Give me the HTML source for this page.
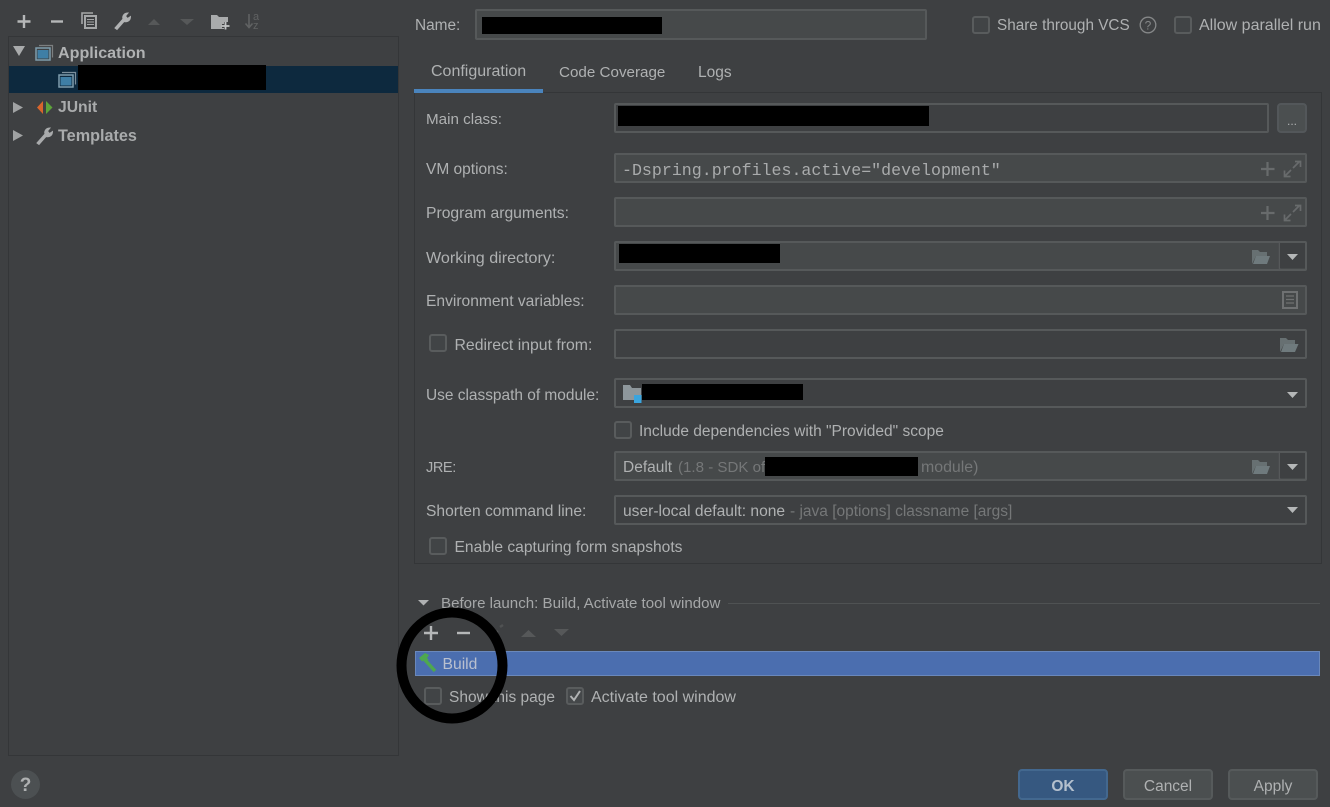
<!DOCTYPE html>
<html><head><meta charset="utf-8"><style>
html,body{margin:0;padding:0;width:1330px;height:807px;overflow:hidden;background:#3e4042}
body{position:relative;font-family:"Liberation Sans",sans-serif;font-size:15.5px;color:#afb1b2}
.a{position:absolute;box-sizing:border-box}
.t{position:absolute;white-space:nowrap;line-height:20px;height:20px}
.f{position:absolute;box-sizing:border-box;left:614px;width:693px;height:30px;border:2px solid #56595a;border-radius:2px;background:#46494a}
.e{background:#3e4042}
.k{position:absolute;background:#000}
.c{position:absolute;box-sizing:border-box;width:18px;height:18px;border:2px solid #595c5d;border-radius:3px;background:#414446}
.b{position:absolute;box-sizing:border-box;top:769px;width:90px;height:31px;border:2px solid #565a5b;border-radius:4px;background:#4b4f50;text-align:center;line-height:32px;font-size:15.5px;color:#afb1b2}
svg{position:absolute;overflow:visible}
</style></head><body>

<!-- left toolbar -->
<svg style="left:0;top:0" width="270" height="36" fill="none">
<path d="M24 15v13M17.5 21.5h13" stroke="#b5b7b8" stroke-width="2.400"/>
<path d="M51 21.5h12" stroke="#b5b7b8" stroke-width="2.400"/>
<path d="M82 24V13h11" stroke="#a5a7a8" stroke-width="1.600"/>
<rect x="85" y="16" width="11" height="12" stroke="#a5a7a8" stroke-width="2"/><path d="M87 19.500h7M87 22h7M87 24.500h7" stroke="#a5a7a8"/>
<path d="M115 28l8-9c-1-3 1-6 5-6l-2.500 3 2 2.500 3-2c0 4-3 6-6.500 5l-7 8z" fill="#b0b2b3" stroke="#b0b2b3"/>
<path d="M148 25l6-6 6 6z" fill="#565859"/><path d="M180 19h14l-7 6z" fill="#565859"/>
<path d="M211 15h6l2 2h9v12h-17z" fill="#a9abac"/><path d="M226 22v8M222 26h8" stroke="#3e4042" stroke-width="4"/><path d="M225.500 22v7.500M221.500 26h8" stroke="#c2c4c5" stroke-width="1.800"/>
<path d="M249 14v13M245.500 23.500l3.500 4 3.500-4" stroke="#606263" stroke-width="1.600"/>
<text x="253" y="20" fill="#606263" font-size="11" font-family="Liberation Sans">a</text><text x="253" y="29" fill="#606263" font-size="11" font-family="Liberation Sans">z</text>
</svg>

<!-- tree -->
<div class="a" style="left:8px;top:36px;width:391px;height:720px;border:1px solid #343638;background:#3e4042"></div>
<div class="a" style="left:9px;top:66px;width:389px;height:27px;background:#0d293e"></div>
<svg style="left:0;top:36px" width="260" height="120" fill="none">
<path d="M13 10h12l-6 10z" fill="#a9abac"/>
<path d="M39 9.500h13.500v12" stroke="#7c7f80" stroke-width="1.200"/><rect x="36" y="12" width="14" height="12" stroke="#7f9dad" stroke-width="1.500"/><rect x="37.500" y="14" width="11" height="8.500" fill="#3f7fa6"/>
<g transform="translate(23,27)"><path d="M39 9.500h13.500v12" stroke="#7c8f9c" stroke-width="1.200"/><rect x="36" y="12" width="14" height="12" stroke="#7f9dad" stroke-width="1.500"/><rect x="37.500" y="14" width="11" height="8.500" fill="#3f7fa6"/></g>
<path d="M13 66l10 5.500-10 5.500z" fill="#a0a2a3"/><path d="M13 94l10 5.500-10 5.500z" fill="#a0a2a3"/>
<path d="M43 65v13l-6-6.500z" fill="#d8652c"/><path d="M46 65v13l6.500-6.500z" fill="#5da43a"/>
<path d="M37 107l8-9c-1-3 1-6 5-6l-2.500 3 2 2.500 3-2c0 4-3 6-6.500 5l-7 8z" fill="#a9abac" stroke="#a9abac"/>
</svg>
<div class="t" style="left:58px;top:43px;font-weight:bold;font-size:16.100px;color:#b0b2b3">Application</div>
<div class="t" style="left:58px;top:98px;font-weight:bold;font-size:15.700px;color:#a9abac">JUnit</div>
<div class="t" style="left:58px;top:126px;font-weight:bold;font-size:16.200px;color:#a9abac">Templates</div>
<div class="k" style="left:78px;top:65px;width:188px;height:25px"></div>

<!-- header -->
<div class="t" style="left:415px;top:16px;font-size:15.400px">Name:</div>
<div class="f" style="left:475px;top:9px;width:452px;height:31px"></div>
<div class="k" style="left:482px;top:17px;width:180px;height:17px"></div>
<div class="c" style="left:972px;top:16px"></div>
<div class="t" style="left:997px;top:16px;font-size:15.300px">Share through VCS</div>
<svg style="left:1139px;top:16px" width="18" height="18" fill="none"><circle cx="9" cy="9" r="7.800" stroke="#858788" stroke-width="1.300"/><text x="9" y="13.500" text-anchor="middle" font-size="12" fill="#858788" font-family="Liberation Sans">?</text></svg>
<div class="c" style="left:1174px;top:16px"></div>
<div class="t" style="left:1199px;top:16px;font-size:16px">Allow parallel run</div>

<!-- tabs -->
<div class="t" style="left:431px;top:62px;font-size:16px">Configuration</div>
<div class="t" style="left:559px;top:63px;font-size:15.200px">Code Coverage</div>
<div class="t" style="left:698px;top:63px;font-size:15.500px">Logs</div>
<div class="a" style="left:414px;top:92px;width:908px;height:472px;border:1px solid #343638;background:#3e4042"></div>
<div class="a" style="left:414px;top:89px;width:129px;height:4px;background:#4a84bd"></div>

<!-- labels -->
<div class="t" style="left:426px;top:110px;font-size:15.200px">Main class:</div>
<div class="t" style="left:426px;top:160px;font-size:15.500px">VM options:</div>
<div class="t" style="left:426px;top:204px;font-size:15.700px">Program arguments:</div>
<div class="t" style="left:426px;top:248px;font-size:16.100px">Working directory:</div>
<div class="t" style="left:426px;top:292px;font-size:15.600px">Environment variables:</div>
<div class="c" style="left:429px;top:334px"></div>
<div class="t" style="left:454.500px;top:336px;font-size:15.800px">Redirect input from:</div>
<div class="t" style="left:426px;top:386px;font-size:15.450px">Use classpath of module:</div>
<div class="c" style="left:614px;top:421px"></div>
<div class="t" style="left:639px;top:422px;font-size:15.500px">Include dependencies with "Provided" scope</div>
<div class="t" style="left:426px;top:458px;font-size:14.500px;letter-spacing:-.4px">JRE:</div>
<div class="t" style="left:426px;top:502px;font-size:15.600px">Shorten command line:</div>
<div class="c" style="left:429px;top:537px"></div>
<div class="t" style="left:454.500px;top:538px;font-size:15.600px">Enable capturing form snapshots</div>

<!-- fields -->
<div class="f e" style="top:103px;width:655px"></div>
<div class="k" style="left:618px;top:106px;width:311px;height:20px"></div>
<div class="a" style="left:1277px;top:103px;width:30px;height:30px;border:2px solid #53575a;border-radius:4px;background:#4b4f50;color:#afb1b2;font-size:12px;text-align:center;line-height:33px">...</div>

<div class="f" style="top:153px"></div>
<div class="t" style="left:622px;top:161px;font-family:'Liberation Mono',monospace;font-size:16.620px;color:#a9abac">-Dspring.profiles.active="development"</div>
<div class="f" style="top:197px"></div>
<div class="f" style="top:241px"></div>
<div class="k" style="left:619px;top:244px;width:161px;height:19px"></div>
<div class="f" style="top:285px"></div>
<div class="f e" style="top:329px"></div>
<div class="f e" style="top:378px"></div>
<div class="k" style="left:642px;top:384px;width:161px;height:16px"></div>
<div class="f" style="top:451px"></div>
<div class="t" style="left:623px;top:458px;font-size:15.500px">Default</div>
<div class="t" style="left:678px;top:458px;color:#757778;font-size:15.100px">(1.8 - SDK of</div>
<div class="k" style="left:765px;top:457px;width:153px;height:19px"></div>
<div class="t" style="left:921px;top:458px;color:#757778;font-size:15.900px">module)</div>
<div class="f e" style="top:495px"></div>
<div class="t" style="left:623px;top:502px;font-size:15.600px">user-local default: none</div>
<div class="t" style="left:790px;top:502px;font-size:15.500px;color:#757778">- java [options] classname [args]</div>

<!-- field icons -->
<svg style="left:0;top:0" width="1330" height="807" fill="none">
<path d="M1267.500 162v14M1261 169h13.500" stroke="#686b6c" stroke-width="2.200"/><path d="M1293 168l6-6M1295 161.500h5.500v5.500" stroke="#686b6c" stroke-width="1.700"/><path d="M1291 170l-6 6M1284.500 170.500v6h6" stroke="#686b6c" stroke-width="1.700"/>
<g transform="translate(0,44)"><path d="M1267.500 162v14M1261 169h13.500" stroke="#686b6c" stroke-width="2.200"/><path d="M1293 168l6-6M1295 161.500h5.500v5.500" stroke="#686b6c" stroke-width="1.700"/><path d="M1291 170l-6 6M1284.500 170.500v6h6" stroke="#686b6c" stroke-width="1.700"/></g>
<path d="M1279.500 242v28" stroke="#56595a" stroke-width="1.500"/>
<path d="M1280 243h25v25h-25z" fill="#3e4042"/>
<path d="M1287 254h11l-5.500 6z" fill="#b5b7b8"/>
<path d="M1252 264v-14h6l2 2h7v4h-11z" fill="#677072"/><path d="M1253 264l3-8h14l-3 8z" fill="#6f7a7d"/>
<rect x="1283" y="292" width="14" height="16" stroke="#6f7172" stroke-width="2"/><path d="M1286 296h8M1286 299.500h8M1286 303h8" stroke="#6f7172" stroke-width="1.300"/>
<path d="M1280 352v-14h6l2 2h7v4h-11z" fill="#677072"/><path d="M1281 352l3-8h14.500l-3.500 8z" fill="#6f7a7d"/>
<path d="M1287 392h11l-5.500 6z" fill="#b5b7b8"/>
<path d="M1279.500 452v28" stroke="#56595a" stroke-width="1.500"/>
<path d="M1280 453h25v25h-25z" fill="#3e4042"/>
<path d="M1287 464h11l-5.500 6z" fill="#b5b7b8"/>
<path d="M1252 474v-14h6l2 2h7v4h-11z" fill="#677072"/><path d="M1253 474l3-8h14l-3 8z" fill="#6f7a7d"/>
<path d="M1287 507h11l-5.500 6z" fill="#b5b7b8"/>
<path d="M623 385h7l2 3h9v12h-18z" fill="#8e979c"/><rect x="634" y="395" width="7.500" height="8" fill="#3aa5df"/>
</svg>

<!-- before launch -->
<svg style="left:0;top:0" width="1330" height="807" fill="none">
<path d="M418 600h11l-5.500 5.500z" fill="#b0b2b3"/>
<path d="M728 603.500h592" stroke="#4f5253" stroke-width="1"/>
<path d="M431 626v14M424 633h14" stroke="#b5b7b8" stroke-width="2.400"/>
<path d="M457 633h13" stroke="#b5b7b8" stroke-width="2.400"/>
<path d="M492 636l6-5M500 627l3-2" stroke="#505253" stroke-width="2.500"/>
<path d="M521 637l7.500-7 7.500 7z" fill="#565859"/><path d="M554 629h15l-7.500 7z" fill="#565859"/>
</svg>
<div class="t" style="left:441px;top:594px;font-size:15.100px;color:#a5a7a8">Before launch: Build, Activate tool window</div>
<div class="a" style="left:415px;top:651px;width:905px;height:25px;background:#4b6eaf;border:1px solid #6a88bb"></div>
<svg style="left:416px;top:652px" width="24" height="22" fill="none"><path d="M3 6l6-5 4 2-2 3 1.500 1.500-2.500 2.500-2-1.500-2 1z" fill="#4ea84f"/><path d="M9 8l10 11" stroke="#4ea84f" stroke-width="3.500"/></svg>
<div class="t" style="left:442.500px;top:655px;color:#b9c0cf;font-size:15.700px">Build</div>
<div class="c" style="left:424px;top:687px"></div>
<div class="t" style="left:449px;top:688px;font-size:15.500px">Show this page</div>
<div class="c" style="left:566px;top:687px;background:#45484a"></div>
<svg style="left:566px;top:687px" width="18" height="18" fill="none"><path d="M4.500 9l3.500 4 6-9" stroke="#b0b2b3" stroke-width="2"/></svg>
<div class="t" style="left:591px;top:688px;font-size:16px">Activate tool window</div>

<!-- black circle -->
<svg style="left:0;top:0" width="1330" height="807" fill="none"><ellipse cx="452" cy="665.500" rx="50.500" ry="53" stroke="#000" stroke-width="10"/></svg>

<!-- bottom -->
<svg style="left:11px;top:770px" width="29" height="29"><circle cx="14.500" cy="14.500" r="14.500" fill="#4c5052"/><text x="14.500" y="21" text-anchor="middle" font-size="19" font-weight="bold" fill="#afb1b2" font-family="Liberation Sans">?</text></svg>
<div class="b" style="left:1018px;background:#365880;border-color:#43688f;font-weight:bold;color:#b4c0cd">OK</div>
<div class="b" style="left:1123px">Cancel</div>
<div class="b" style="left:1228px">Apply</div>
</body></html>
